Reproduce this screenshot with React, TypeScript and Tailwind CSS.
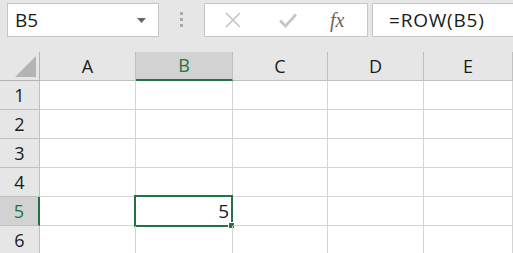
import React from "react";

const cols = ["A", "B", "C", "D", "E"];
const rows = [1, 2, 3, 4, 5, 6];

const font = { fontFamily: "'Open Sans', 'Noto Sans', sans-serif" };

export default function App() {
  return (
    <div className="w-[513px] h-[253px] overflow-hidden bg-[#e6e6e6] text-[#1a1a1a]" style={font}>
      {/* formula bar */}
      <div className="flex items-start h-[52px] pt-[3px] pl-[7px]">
        <div className="flex items-center w-[152px] h-[34px] bg-white border border-[#c6c6c6] pl-[7px] pr-[12px]">
          <span className="text-[19px] leading-none flex-1">B5</span>
          <svg width="9" height="5" viewBox="0 0 9 5">
            <path d="M0 0h9L4.5 5z" fill="#666" />
          </svg>
        </div>
        <div className="flex flex-col gap-[3px] w-[45px] items-center pt-[9px]">
          <span className="w-[3px] h-[3px] bg-[#a8a8a8]" />
          <span className="w-[3px] h-[3px] bg-[#a8a8a8]" />
          <span className="w-[3px] h-[3px] bg-[#a8a8a8]" />
        </div>
        <div className="flex items-center w-[164px] h-[34px] bg-white border border-[#c6c6c6] pl-[18px]">
          <svg width="20" height="16" viewBox="0 0 20 16" className="mr-[35px]">
            <path d="M3 1L17 15M17 1L3 15" stroke="#c4c4c4" strokeWidth="1.6" fill="none" />
          </svg>
          <svg width="20" height="16" viewBox="0 0 20 16" className="mr-[32px]">
            <path d="M2 8.5L7.5 14L18 2.5" stroke="#c4c4c4" strokeWidth="2.6" fill="none" />
          </svg>
          <span className="text-[20px] italic text-[#666] leading-none" style={{ fontFamily: "'Liberation Serif', serif" }}>
            fx
          </span>
        </div>
        <div className="flex items-center flex-1 h-[34px] bg-white border border-[#c6c6c6] border-r-0 ml-[4px] pl-[16px]">
          <span className="text-[19px] leading-none tracking-[0.8px]">=ROW(B5)</span>
        </div>
      </div>

      {/* grid */}
      <div className="grid grid-cols-[40px_96px_97px_95px_96px_1fr] grid-rows-[29px_29px_29px_29px_29px_29px_29px] bg-white">
        <div className="relative bg-[#e6e6e6] border-r border-b border-[#b4b4b4]">
          <svg width="22" height="22" viewBox="0 0 22 22" className="absolute left-[15px] top-[4px]">
            <path d="M21 0V21H0z" fill="#b4b4b4" />
          </svg>
        </div>
        {cols.map((c) => (
          <div
            key={c}
            className={
              c === "B"
                ? "flex items-center justify-center bg-[#d2d2d2] border-r border-[#c0c0c0] border-b-2 border-b-[#217346] text-[#217346] text-[18px]"
                : "flex items-center justify-center bg-[#e6e6e6] border-r border-b border-[#c0c0c0] text-[18px]"
            }
          >
            {c}
          </div>
        ))}
        {rows.map((r) => (
          <React.Fragment key={r}>
            <div
              className={
                r === 5
                  ? "flex items-center justify-center bg-[#d2d2d2] border-b border-b-[#c0c0c0] border-r-2 border-r-[#217346] text-[#217346] text-[18px]"
                  : "flex items-center justify-center bg-[#e6e6e6] border-r border-b border-[#c0c0c0] text-[18px]"
              }
            >
              {r}
            </div>
            {cols.map((c) => (
              <div key={c} className="relative border-r border-b border-[#d4d4d4]">
                {r === 5 && c === "B" && (
                  <div className="absolute left-[-2px] top-[-2px] right-[-1px] bottom-[-2px] border-2 border-[#217346] flex items-center justify-end pr-[2px]">
                    <span className="text-[19px] leading-none">5</span>
                    <span className="absolute right-[-4px] bottom-[-4px] w-[7px] h-[7px] bg-[#217346] border border-white" />
                  </div>
                )}
              </div>
            ))}
          </React.Fragment>
        ))}
      </div>
    </div>
  );
}
